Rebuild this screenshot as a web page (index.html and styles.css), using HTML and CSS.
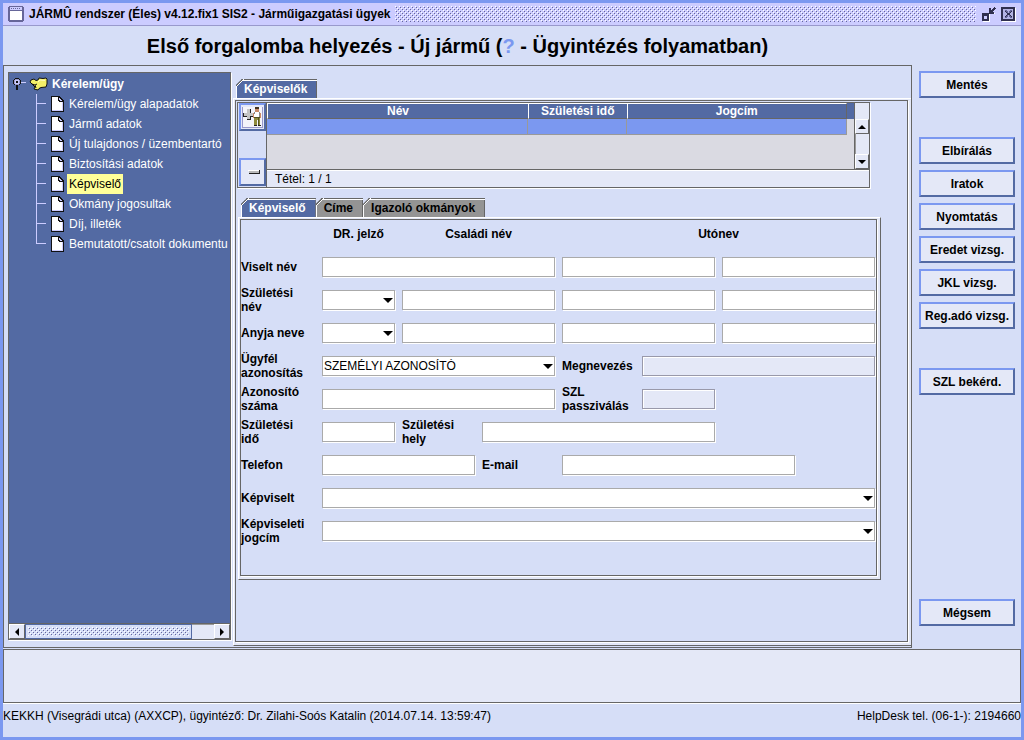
FILE: index.html
```html
<!DOCTYPE html>
<html lang="hu">
<head>
<meta charset="utf-8">
<title>JÁRMÛ rendszer</title>
<link rel="stylesheet" href="styles.css">
</head>
<body>
<svg class="sprites" aria-hidden="true">
  <symbol id="page" viewBox="0 0 13 16">
    <path fill="#111" d="M0 0h9v1h1v1h1v1h1v1h1v12H0z"/>
    <path fill="#fff" d="M1 1h6v4h1v1h4v9H1z"/>
    <path fill="#ccf" d="M8 2h1v1h1v1h1v1H9V4H8zM11 6h1v9H1v-1h10z"/>
  </symbol>
</svg>
<div class="window">
  <header class="titlebar">
    <svg width="16" height="16" viewBox="0 0 16 16" shape-rendering="crispEdges"><path fill="#666699" d="M1 0h14v1h1v14h-1v1H1v-1H0V1h1z"/><path fill="#ccccff" d="M2 1h12v3H2z"/><path fill="#fff" d="M2 5h12v9H2z"/><path fill="#666699" d="M3 2h1v1H3zM5 2h1v1H5zM7 2h1v1H7zM9 2h1v1H9zM11 2h1v1h-1z"/></svg>
    <span class="title">JÁRMÛ rendszer (Éles) v4.12.fix1 SIS2 - Járműigazgatási ügyek</span>
    <span class="grip"></span>
    <button class="win-btn" aria-label="Kicsinyítés"><svg width="15" height="15" viewBox="0 0 15 15" shape-rendering="crispEdges"><path fill="#fff" d="M2 7h7v8H2z"/><path fill="#30304f" d="M1 6h7v8H1z"/><path fill="#ccccff" d="M3 9h3v3H3z"/><path fill="#fff" d="M9 6h5v1H9z"/><path fill="#30304f" d="M8 1h2v2h1V2h1V1h1V0h1v1h1v1h-1v1h-1v1h-1v1h1v2H8z"/></svg></button>
    <button class="win-btn" aria-label="Bezárás"><svg width="15" height="15" viewBox="0 0 15 15" shape-rendering="crispEdges"><path fill="#fff" d="M1 1h14v14H1z"/><path fill="#30304f" d="M0 0h14v14H0z"/><path fill="#b4b4e4" d="M2 2h10v10H2z"/><path fill="#666699" d="M4 3h2v1h1v2h1V4h1V3h2v2h-1v1H9v2h1v1h1v2H9v-1H8V8H7v2H6v1H4V9h1V8h1V6H5V5H4z"/><path fill="#30304f" d="M4 4h1v1h1v1h3V5h1V4h1v1h-1v1H9v2h1v1h1v1h-1V9H9V8H6v1H5v1H4V9h1V8h1V6H5V5H4z"/></svg></button>
  </header>
  <h1 class="heading">Első forgalomba helyezés - Új jármű (<span class="query">?</span> - Ügyintézés folyamatban)</h1>

  <div class="body">
    <div class="work">
      <nav class="tree-pane">
        <div class="tree">
          <div class="root">
            <svg width="14" height="14" viewBox="0 0 14 14" shape-rendering="crispEdges"><path fill="#111" d="M3 1h4v1h1v1h1v4H8v1H6v5H4V8H2V7H1V3h1V2h1z"/><path fill="#9999cc" d="M3 2h4v1h1v4H7v1H3V7H2V3h1z"/><path fill="#ccccff" d="M3 3h4v4H3z"/><path fill="#111" d="M4 4h2v2H4zM4 8h2v5H4z"/><path fill="#ccccff" d="M9 5h5v1H9z"/></svg>
            <svg width="20" height="14" viewBox="0 0 20 14"><path fill="#f4ef68" stroke="#111" d="M1 5l1-2 3-1 2 1.500L9 3l1-2 4 .5 3-.5 1 1v5l-1 3-5 .5-2 1-1 1.500-4-1 1-2-3-3z"/><path fill="none" stroke="#111" d="M3 7l3 1 1 3M6 8l2-1"/><path fill="none" stroke="#fffbc0" d="M9 5l2-2 5 .5"/></svg>
            <span>Kérelem/ügy</span>
          </div>
          <ul class="leaves">
            <li><svg class="page"><use href="#page"/></svg><a href="#">Kérelem/ügy alapadatok</a></li>
            <li><svg class="page"><use href="#page"/></svg><a href="#">Jármű adatok</a></li>
            <li><svg class="page"><use href="#page"/></svg><a href="#">Új tulajdonos / üzembentartó</a></li>
            <li><svg class="page"><use href="#page"/></svg><a href="#">Biztosítási adatok</a></li>
            <li><svg class="page"><use href="#page"/></svg><a href="#" class="current">Képviselő</a></li>
            <li><svg class="page"><use href="#page"/></svg><a href="#">Okmány jogosultak</a></li>
            <li><svg class="page"><use href="#page"/></svg><a href="#">Díj, illeték</a></li>
            <li><svg class="page"><use href="#page"/></svg><a href="#">Bemutatott/csatolt dokumentu</a></li>
          </ul>
        </div>
        <div class="hscroll"><button class="arrow left" aria-label="Balra"></button><span class="thumb"></span><span class="track"></span><button class="arrow right" aria-label="Jobbra"></button></div>
      </nav>

      <section class="content">
        <div class="tabs"><button class="tab active">Képviselők</button></div>
        <div class="panel fill">
          <div class="inner">
            <div class="list">
              <div class="list-tools">
                <button class="tool" aria-label="Új képviselő"><svg width="21" height="22" viewBox="0 0 22 22" shape-rendering="crispEdges"><path fill="#f4f4fa" d="M1 1h20v20H1z"/><path fill="#9999cc" d="M0 0h22v22H0zM1 1v20h20V1z" fill-rule="evenodd"/><path fill="#222" d="M5 3h4v4h4v4H9v3H5v-3H1V7h4z"/><path fill="#c4c4c4" d="M5 3h3v4h4v3H8v3H5v-3H2V7h3z"/><path fill="#43321f" d="M14 1h4v2h-4z"/><path fill="#c98a66" d="M14 3h4v3h-4zM12 7h1v5h-1zM19 7h1v5h-1z"/><path fill="#fff" d="M13 6h6v5h-6z"/><path fill="#888" d="M13 6h1v2h-1zM18 6h1v5h-1z"/><path fill="#8e8a3c" d="M13 11h6v8h-2v-5h-1v5h-3z"/><path fill="#55521f" d="M17 12h1v7h-1zM13 11h6v1h-6z"/><path fill="#222" d="M13 19h3v1h-3zM17 19h3v1h-3z"/></svg></button>
                <button class="tool" aria-label="Törlés"><svg width="22" height="22" viewBox="0 0 22 22" shape-rendering="crispEdges"><path fill="#222" d="M7 9h11v4H7z"/><path fill="#fff" d="M6 9h11v1H6z"/><path fill="#bbb" d="M7 10h10v2H7z"/></svg></button>
              </div>
              <div class="list-main">
                <div class="list-scroll">
                  <div class="list-view">
                    <table class="grid">
                      <colgroup><col class="c-name"><col class="c-date"><col class="c-title"></colgroup>
                      <thead><tr><th>Név</th><th>Születési idő</th><th>Jogcím</th></tr></thead>
                      <tbody><tr><td></td><td></td><td></td></tr></tbody>
                    </table>
                  </div>
                  <div class="vscroll"><span class="corner"></span><button class="arrow up" aria-label="Fel"></button><span class="vtrack"></span><button class="arrow down" aria-label="Le"></button></div>
                </div>
                <div class="count">Tétel: 1 / 1</div>
              </div>
            </div>

            <div class="detail">
              <div class="tabs"><button class="tab active">Képviselő</button><button class="tab">Címe</button><button class="tab">Igazoló okmányok</button></div>
              <div class="panel sheet">
                <form class="inner form">
                  <span class="head k2">DR. jelző</span><span class="head w2">Családi név</span><span class="head w4">Utónev</span>

                  <label class="k1" for="f1">Viselt név</label><input id="f1" class="w3"><input class="w2" aria-label="Utónév 1"><input class="w2" aria-label="Utónév 2">

                  <label class="k1" for="f2">Születési<br>név</label><select id="f2"></select><input class="w2" aria-label="Születési családi név"><input class="w2" aria-label="Születési utónév 1"><input class="w2" aria-label="Születési utónév 2">

                  <label class="k1" for="f3">Anyja neve</label><select id="f3"></select><input class="w2" aria-label="Anyja családi neve"><input class="w2" aria-label="Anyja utóneve 1"><input class="w2" aria-label="Anyja utóneve 2">

                  <label class="k1" for="f4">Ügyfél<br>azonosítás</label><select id="f4" class="w3"><option>SZEMÉLYI AZONOSÍTÓ</option></select><label for="f5">Megnevezés</label><input id="f5" class="w3" disabled>

                  <label class="k1" for="f6">Azonosító<br>száma</label><input id="f6" class="w3"><label for="f7">SZL<br>passziválás</label><input id="f7" disabled>

                  <label class="k1" for="f8">Születési<br>idő</label><input id="f8"><label for="f9">Születési<br>hely</label><input id="f9" class="w3">

                  <label class="k1" for="f10">Telefon</label><input id="f10" class="w2"><label for="f11">E-mail</label><input id="f11" class="w3">

                  <label class="k1" for="f12">Képviselt</label><select id="f12" class="w7"></select>

                  <label class="k1" for="f13">Képviseleti<br>jogcím</label><select id="f13" class="w7"></select>
                </form>
              </div>
            </div>
          </div>
        </div>
      </section>
    </div>

    <aside class="actions">
      <button class="action">Mentés</button>
      <div class="group">
        <button class="action">Elbírálás</button>
        <button class="action">Iratok</button>
        <button class="action">Nyomtatás</button>
        <button class="action">Eredet vizsg.</button>
        <button class="action">JKL vizsg.</button>
        <button class="action">Reg.adó vizsg.</button>
      </div>
      <button class="action">SZL bekérd.</button>
      <button class="action last">Mégsem</button>
    </aside>
  </div>

  <div class="messages"></div>
  <footer class="status"><span>KEKKH (Visegrádi utca) (AXXCP), ügyintéző: Dr. Zilahi-Soós Katalin (2014.07.14. 13:59:47)</span><span>HelpDesk tel. (06-1-): 2194660</span></footer>
</div>
</body>
</html>
```

FILE: styles.css
```css
* { box-sizing: border-box; }
body {
  --sky: #d6def7;
  --pale: #e4e8f7;
  --navy: #536aa3;
  --blue: #7b98f0;
  --line: #666;
  margin: 0;
  font: 12px/14px "Liberation Sans", Arial, sans-serif;
  color: #000;
}
button, input, select { font: inherit; color: inherit; margin: 0; border-radius: 0; min-width: 0; }
button { cursor: pointer; padding: 0; }
.sprites { display: none; }

.window { display: flex; flex-direction: column; min-height: 100vh; background: var(--sky); border: 3px solid var(--blue); }

/* Title bar */
.titlebar { display: flex; align-items: center; gap: 5px; height: 23px; padding: 0 5px; background: #ccf; border-bottom: 1px solid #99c; font-weight: bold; }
.title { white-space: nowrap; }
.grip, .thumb {
  --dark: conic-gradient(at 1px 1px, transparent 75%, #669 0);
  --light: conic-gradient(at 1px 1px, transparent 75%, #fff 0);
  background-image: var(--dark), var(--dark), var(--light), var(--light);
  background-size: 4px 4px;
  background-position: 1px 1px, 3px 3px, 0 0, 2px 2px;
}
.grip { flex: 1; height: 16px; }
.win-btn { display: flex; border: 0; background: none; }
.heading { margin: 0; padding-right: 109px; height: 39px; font-size: 20px; line-height: 40px; text-align: center; }
.query { color: var(--blue); }

.body { flex: 1; display: flex; }
.work { flex: 1; min-width: 0; display: flex; margin-bottom: 1px; padding: 6px 0 1px 4px; gap: 2px; border: 1px solid var(--line); }

/* Tree */
.tree-pane { flex: none; width: 223px; display: flex; flex-direction: column; margin-bottom: 6px; border: 1px solid var(--line); box-shadow: 1px 1px #fff; background: var(--navy); color: #fff; overflow: hidden; }
.tree { flex: 1; padding-top: 1px; }
.root { display: flex; align-items: center; gap: 3px; height: 20px; padding-left: 3px; font-weight: bold; }
.leaves { list-style: none; margin: 0; padding: 0 0 0 27px; }
.leaves li { display: flex; align-items: center; height: 20px; gap: 3px; padding-left: 15px; white-space: nowrap; background: linear-gradient(#ccf, #ccf) 0 9px / 10px 1px no-repeat, linear-gradient(#ccf, #ccf) 0 0 / 1px 100% no-repeat; }
.leaves li:last-child { background-size: 10px 1px, 1px 10px; }
.leaves a { color: #fff; text-decoration: none; line-height: 20px; padding: 0 2px; }
.leaves .current { background: #ff9; color: #000; }
.page { flex: none; width: 13px; height: 16px; shape-rendering: crispEdges; }

/* Scroll bars */
.hscroll { display: flex; height: 16px; background: var(--pale); border-top: 1px solid var(--line); }
.thumb { flex: 1; padding: 2px; background-color: var(--sky); background-clip: content-box; border: 1px solid var(--navy); box-shadow: inset 0 0 0 2px var(--sky); }
.track { width: 22px; border-top: 1px solid #999; }
.arrow { display: grid; place-items: center; width: 16px; height: 15px; border: 1px solid #fff; border-right-color: var(--line); border-bottom-color: var(--line); background: var(--pale); }
.arrow::before { content: ""; border: 4px solid transparent; }
.left::before { border-right-color: #000; border-left: 0; }
.right::before { border-left-color: #000; border-right: 0; }
.up::before { border-bottom-color: #000; border-top: 0; }
.down::before { border-top-color: #000; border-bottom: 0; }

/* Tabs and framed panels */
.content { flex: 1; min-width: 0; display: flex; flex-direction: column; padding-top: 7px; }
.tabs { display: flex; height: 19px; padding-left: 3px; }
.tab {
  --fill: #949494;
  height: 19px;
  padding: 0 10px 0 8px;
  border: 0;
  background:
    linear-gradient(135deg, var(--line) 5px, #fff 5px, #fff 6px, transparent 6px) 0 0 / 10px 10px no-repeat,
    linear-gradient(var(--line), var(--line)) 0 0 / 100% 1px no-repeat,
    linear-gradient(#fff, #fff) 0 1px / 100% 1px no-repeat,
    linear-gradient(var(--line), var(--line)) 100% 0 / 1px 100% no-repeat,
    linear-gradient(#fff, #fff) 0 6px / 1px 100% no-repeat,
    var(--fill);
  font-weight: bold;
  clip-path: polygon(6px 0, 100% 0, 100% 100%, 0 100%, 0 6px);
}
.active { --fill: var(--navy); color: #fff; }
.panel { padding: 1px 3px 3px 1px; border: 1px solid #fff; border-right: 0; border-bottom-color: var(--line); background: var(--pale); }
.inner { border: 1px solid var(--line); box-shadow: 1px 1px #fff; background: var(--sky); }
.fill { flex: 1; display: flex; }
.fill > .inner { flex: 1; min-width: 0; }

/* Representative list */
.list { display: flex; margin: 1px 37px 0 1px; height: 86px; border: 1px solid var(--line); box-shadow: 1px 1px #fff; }
.list-tools { display: flex; flex-direction: column; justify-content: space-between; padding: 0 0 1px 1px; }
.tool { display: grid; place-items: center; width: 27px; height: 28px; border: 2px solid; border-color: var(--blue) var(--navy) var(--navy) var(--blue); background: var(--pale); }
.list-main { flex: 1; min-width: 0; display: flex; flex-direction: column; border-left: 1px solid var(--line); }
.list-scroll { flex: 1; display: flex; border-bottom: 1px solid var(--line); }
.list-view { flex: 1; min-width: 0; padding-right: 7px; background: linear-gradient(var(--navy), var(--navy)) 0 0 / 100% 16px no-repeat #dadae2; }
.grid { width: 100%; table-layout: fixed; border-collapse: separate; border-spacing: 0; }
.c-name { width: 45%; }
.c-date { width: 17%; }
.c-title { width: 38%; }
.grid th { height: 16px; padding: 0; line-height: 14px; color: #fff; background: var(--navy); border: 1px solid #fff; border-right: 0; border-bottom-color: var(--line); }
.grid th:last-child { border-right: 1px solid var(--line); }
.grid td { height: 16px; padding: 0; background: var(--blue); border: solid #999; border-width: 0 1px 1px 0; }
.vscroll { width: 15px; display: flex; flex-direction: column; background: var(--pale); border-left: 1px solid var(--line); }
.vscroll .arrow { width: 14px; }
.corner { height: 16px; background: var(--pale); }
.vtrack { flex: 1; border-left: 1px solid #999; }
.count { height: 17px; padding-left: 8px; line-height: 16px; background: var(--pale); border-top: 1px solid #fff; }

/* Form */
.detail { margin: 10px 26px 0 2px; }
.sheet { border-right: 1px solid var(--line); }
.form { display: grid; grid-template-columns: 74px repeat(7, minmax(0, 1fr)); grid-auto-rows: 28px; gap: 5px 7px; align-items: center; padding: 0 1px 30px 0; font-weight: bold; }
.form label { white-space: nowrap; }
.head { text-align: center; }
.k1 { grid-column: 1; }
.k2 { grid-column: 2; }
.w2 { grid-column: span 2; }
.w3 { grid-column: span 3; }
.w4 { grid-column: span 4; }
.w7 { grid-column: span 7; }
.form input, .form select { width: 100%; height: 20px; padding: 0 1px; border: 1px solid #aaa; background: #fff; box-shadow: 1px 1px #fff; font-weight: normal; }
.form select { appearance: none; background: url("data:image/svg+xml,%3Csvg xmlns='http://www.w3.org/2000/svg' width='10' height='5'%3E%3Cpath d='M0 0h10L5 5z'/%3E%3C/svg%3E") right 1px top 7px no-repeat #fff; }
.form input:disabled { background: var(--pale); border-color: #99a; box-shadow: 1px 1px #fff, inset 1px 1px #fff; }

/* Side buttons */
.actions { flex: none; width: 109px; display: flex; flex-direction: column; padding: 6px 6px 23px 7px; }
.group { display: flex; flex-direction: column; gap: 6px; margin: 39px 0; }
.action { height: 27px; border: 2px solid; border-color: var(--blue) var(--navy) var(--navy) var(--blue); background: var(--pale); font-weight: bold; white-space: nowrap; }
.last { margin-top: auto; }

.messages { height: 54px; border: 1px solid var(--line); box-shadow: 0 1px #fff; background: var(--pale); }
.status { display: flex; justify-content: space-between; height: 34px; padding-top: 6px; white-space: nowrap; }
```
